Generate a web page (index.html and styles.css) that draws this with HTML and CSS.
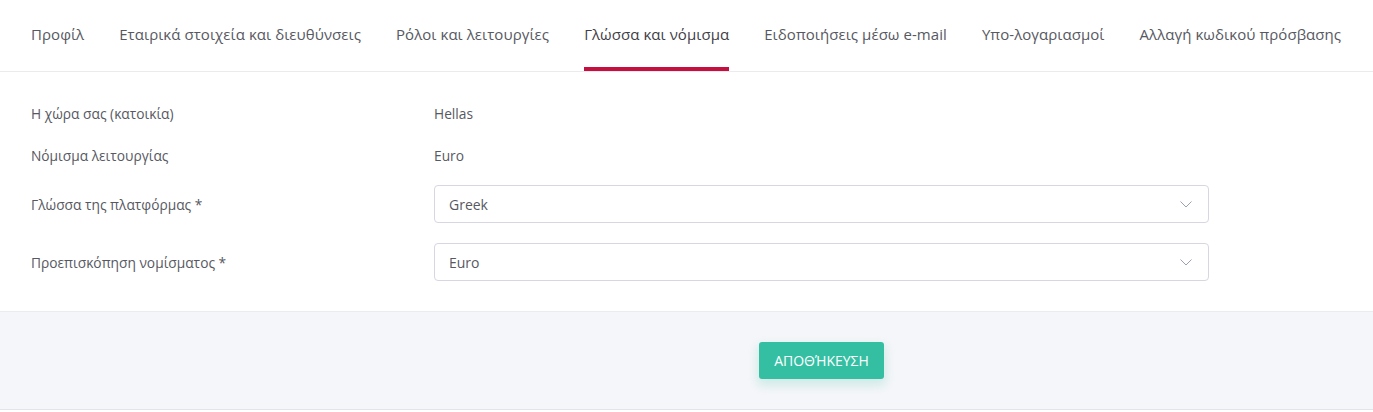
FILE: index.html
```html
<!DOCTYPE html>
<html lang="el">
<head>
<meta charset="utf-8">
<link rel="stylesheet" href="styles.css">
</head>
<body>
<div class="page">
  <nav class="tabs">
    <a class="tab">Προφίλ</a>
    <a class="tab">Εταιρικά στοιχεία και διευθύνσεις</a>
    <a class="tab">Ρόλοι και λειτουργίες</a>
    <a class="tab active">Γλώσσα και νόμισμα</a>
    <a class="tab">Ειδοποιήσεις μέσω e-mail</a>
    <a class="tab">Υπο-λογαριασμοί</a>
    <a class="tab">Αλλαγή κωδικού πρόσβασης</a>
  </nav>
  <div class="form">
    <div class="row text-row">
      <div class="label">Η χώρα σας (κατοικία)</div>
      <div class="value">Hellas</div>
    </div>
    <div class="row text-row">
      <div class="label">Νόμισμα λειτουργίας</div>
      <div class="value">Euro</div>
    </div>
    <div class="row select-row">
      <div class="label">Γλώσσα της πλατφόρμας *</div>
      <div class="select"><span>Greek</span>
        <svg class="chev" width="12" height="7" viewBox="0 0 12 7"><path d="M0.5 0.5 L6 6 L11.5 0.5" fill="none" stroke="#9aa0b8" stroke-width="1"/></svg>
      </div>
    </div>
    <div class="row select-row">
      <div class="label">Προεπισκόπηση νομίσματος *</div>
      <div class="select"><span>Euro</span>
        <svg class="chev" width="12" height="7" viewBox="0 0 12 7"><path d="M0.5 0.5 L6 6 L11.5 0.5" fill="none" stroke="#9aa0b8" stroke-width="1"/></svg>
      </div>
    </div>
  </div>
  <div class="footer">
    <div class="footer-inner">
      <button class="save">ΑΠΟΘΉΚΕΥΣΗ</button>
    </div>
  </div>
</div>
</body>
</html>
```
FILE: styles.css
```css
* { box-sizing: border-box; }
html, body { margin: 0; padding: 0; background: #fff; }
body { font-family: "Open Sans", "Noto Sans", sans-serif; color: #4a4a4a; }
.page { width: 1373px; }
.tabs {
  display: flex;
  gap: 35px;
  padding-left: 31px;
  height: 72px;
  border-bottom: 1px solid #ebebef;
}
.tab {
  display: flex;
  align-items: center;
  height: 71px;
  font-size: 15px;
  letter-spacing: 0.06px;
  color: #575962;
  border-bottom: 4px solid transparent;
  padding-top: 1px;
  white-space: nowrap;
}
.tab.active { color: #3f4047; border-bottom-color: #c5103f; }
.form { padding: 30px 0 30px 31px; }
.row { display: grid; grid-template-columns: 403px 775px; align-items: center; }
.text-row { height: 22px; margin-bottom: 20px; }
.text-row + .select-row { margin-top: -1px; }
.select-row { height: 38px; margin-bottom: 20px; }
.select-row:last-child { margin-bottom: 0; }
.label { font-size: 13.75px; color: #575962; }
.value { font-size: 13.75px; color: #575962; }
.select {
  height: 38px;
  border: 1px solid #d7d6e3;
  border-radius: 4px;
  display: flex;
  align-items: center;
  justify-content: space-between;
  padding: 0 16px 0 14px;
  font-size: 14px;
  color: #575962;
}
.chev { margin-top: 1px; }
.footer {
  background: #f5f6f9;
  border-top: 1px solid #ebecf0;
  border-bottom: 1px solid #e3e4ea;
  height: 99px;
  padding-left: 434px;
}
.footer-inner { width: 775px; display: flex; justify-content: center; padding-top: 30px; }
.save {
  width: 125px;
  height: 37px;
  border: none;
  border-radius: 3px;
  background: #34bfa3;
  color: #fff;
  font-family: "Open Sans", "Noto Sans", sans-serif;
  font-size: 14px;
  box-shadow: 0 5px 10px 2px rgba(52, 191, 163, 0.19);
  padding: 0;
}
```
